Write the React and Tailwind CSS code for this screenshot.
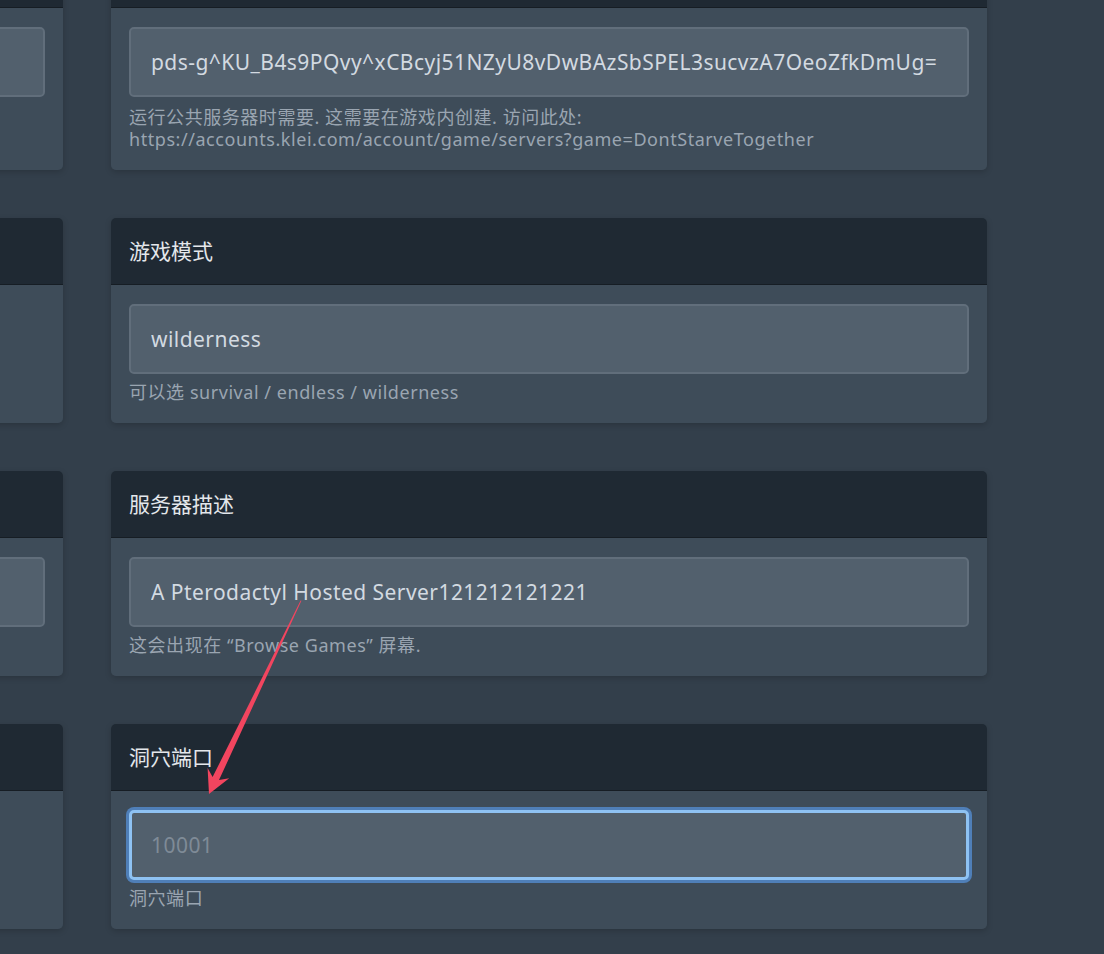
import { useState } from "react";

const font = "font-[family-name:'Noto_Sans','Noto_Sans_CJK_SC',sans-serif]";

function Arrow() {
    // arrow drawn over the page, from the description input down to the cave port input
    return (
        <svg
            className="absolute left-0 top-0 pointer-events-none"
            width="1104"
            height="954"
            viewBox="0 0 1104 954"
        >
            <polygon
                points="300.6,600.4 301.4,600.8 219,780.1 229.2,778.2 209,794 207.6,768 212.6,777.1"
                fill="#f2455f"
            />
        </svg>
    );
}

function Field({ title, value, placeholder, help, focused, empty, helpGap = "mt-[7px]", bodyPb = "pb-[20px]" }) {
    const [text, setText] = useState(value || "");

    return (
        <div className="rounded-[5px] shadow-[0_2px_6px_rgba(0,0,0,0.18)] overflow-hidden">
            <div className="h-[67px] bg-[#1f2933] border-b border-[#161d24] flex items-center px-[18px]">
                <h2 className="text-[21px] leading-[30px] text-[#e4e7eb]">{title}</h2>
            </div>
            <div className={`bg-[#3e4c59] px-[18px] pt-[19px] ${bodyPb}`}>
                {empty ? (
                    <div className="h-[70px]" />
                ) : (
                    <input
                        value={text}
                        onChange={(e) => setText(e.target.value)}
                        placeholder={placeholder}
                        className={`block w-full h-[70px] rounded-[5px] bg-[#52606d] text-[21px] tracking-[0.45px] text-[#d3dae1] placeholder:text-[#7f8b97] outline-none ${
                            focused
                                ? "border-[3px] border-[#8ec2f3] ring-[3px] ring-[#4f7fb8] pl-[19px]"
                                : "border-2 border-[#616e7b] px-5"
                        }`}
                    />
                )}
                <p className={`${helpGap} min-h-[22px] text-[18px] leading-[22px] tracking-[0.55px] text-[#9aa5b1] break-all`}>
                    {help}
                </p>
            </div>
        </div>
    );
}

const rightFields = [
    {
        title: "服务器令牌",
        value: "pds-g^KU_B4s9PQvy^xCBcyj51NZyU8vDwBAzSbSPEL3sucvzA7OeoZfkDmUg=",
        help: (
            <>
                运行公共服务器时需要. 这需要在游戏内创建. 访问此处:
                <br />
                https://accounts.klei.com/account/game/servers?game=DontStarveTogether
            </>
        ),
        helpGap: "mt-[9px]",
        bodyPb: "pb-[20px]",
    },
    { title: "游戏模式", value: "wilderness", help: "可以选 survival / endless / wilderness" },
    { title: "服务器描述", value: "A Pterodactyl Hosted Server121212121221", help: "这会出现在 “Browse Games” 屏幕." },
    { title: "洞穴端口", placeholder: "10001", help: "洞穴端口", focused: true },
];

const leftFields = [
    { title: "服务器名称", value: "", help: <>显示在服务器列表中.<br />&nbsp;</>, helpGap: "mt-[9px]", bodyPb: "pb-[20px]" },
    { title: "最大玩家数", empty: true, help: "\u00a0" },
    { title: "服务器密码", value: "", help: "\u00a0" },
    { title: "主世界端口", empty: true, help: "\u00a0" },
];

export default function App() {
    return (
        <div className={`relative w-[1104px] h-[954px] overflow-hidden bg-[#333f4b] ${font}`}>
            <div className="flex gap-12 ml-[-813px] mt-[-59px]">
                <div className="w-[876px] shrink-0 flex flex-col gap-[48px]">
                    {leftFields.map((f) => (
                        <Field key={f.title} {...f} />
                    ))}
                </div>
                <div className="w-[876px] shrink-0 flex flex-col gap-[48px]">
                    {rightFields.map((f) => (
                        <Field key={f.title} {...f} />
                    ))}
                </div>
            </div>
            <Arrow />
        </div>
    );
}
